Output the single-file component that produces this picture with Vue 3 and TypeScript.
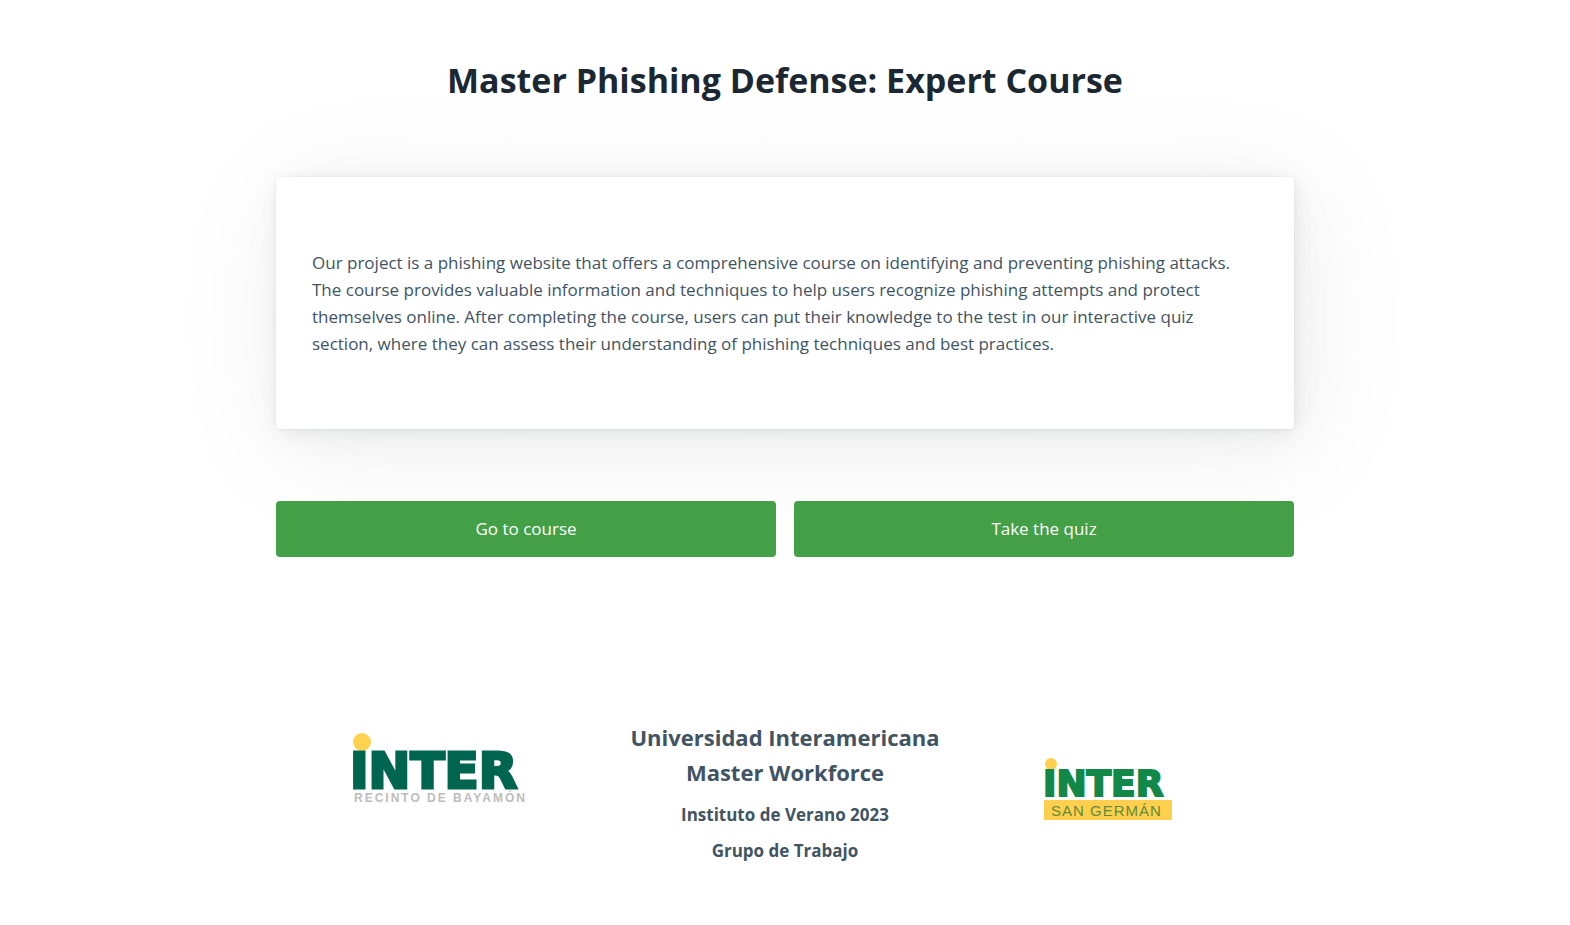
<script setup lang="ts">
const actions: string[] = ['Go to course', 'Take the quiz']
</script>

<template>
  <main class="container">
    <h1>Master Phishing Defense: Expert Course</h1>
    <article>
      <p>
        Our project is a phishing website that offers a comprehensive course on identifying and
        preventing phishing attacks. The course provides valuable information and techniques to help
        users recognize phishing attempts and protect themselves online. After completing the course,
        users can put their knowledge to the test in our interactive quiz section, where they can
        assess their understanding of phishing techniques and best practices.
      </p>
    </article>
    <div class="actions">
      <button v-for="action in actions" :key="action" type="button">{{ action }}</button>
    </div>
  </main>

  <footer class="container footer">
    <div class="brand">
      <svg width="176" height="76" viewBox="0 0 176 76" role="img" aria-label="Inter Recinto de Bayamón">
        <circle cx="10" cy="10" r="9" fill="#ffd24f" />
        <text class="wordmark bayamon" x="-2" y="56">INTER</text>
        <text class="bayamon-campus" x="2" y="70">RECINTO DE BAYAMÓN</text>
      </svg>
    </div>
    <div class="credits">
      <h3>Universidad Interamericana Master Workforce</h3>
      <h4>Instituto de Verano 2023</h4>
      <h4>Grupo de Trabajo</h4>
    </div>
    <div class="brand german-brand">
      <svg width="128" height="64" viewBox="0 0 128 64" role="img" aria-label="Inter San Germán">
        <circle cx="7" cy="7" r="6" fill="#ffcf4d" />
        <text class="wordmark german" x="-1" y="39">INTER</text>
        <rect x="0" y="43" width="128" height="20" fill="#ffcf4d" />
        <text class="german-campus" x="7" y="59">SAN GERMÁN</text>
      </svg>
    </div>
  </footer>
</template>

<style>
body {
  background: #fff;
}
</style>

<style scoped>
.container {
  box-sizing: border-box;
  max-width: 1018px;
  margin: 0 auto;
  font-family: "Open Sans", "Noto Sans", sans-serif;
  font-size: 17px;
  line-height: 27px;
  color: #415462;
}
h1 {
  margin: 55px 0 71px;
  text-align: center;
  font-size: 34px;
  line-height: 51px;
  color: #1b2832;
}
article {
  padding: 72px 36px;
  border-radius: 4px;
  background: #fff;
  box-shadow:
    0 1px 3px rgba(27, 40, 50, 0.017),
    1px 1px 7px rgba(27, 40, 50, 0.024),
    1px 2px 14px rgba(27, 40, 50, 0.03),
    2px 4px 24px rgba(27, 40, 50, 0.036),
    4px 8px 45px rgba(27, 40, 50, 0.043),
    9px 18px 120px 8px rgba(27, 40, 50, 0.06),
    0 0 0 1px rgba(27, 40, 50, 0.015);
}
p {
  margin: 0;
}
.actions {
  display: grid;
  grid-template-columns: 1fr 1fr;
  gap: 18px;
  margin-top: 72px;
}
button {
  padding: 14px 18px;
  border: 0;
  border-radius: 4px;
  background: #43a047;
  color: #fff;
  font: inherit;
  line-height: 28px;
  cursor: pointer;
}
.footer {
  display: grid;
  grid-template-columns: repeat(3, 1fr);
  gap: 18px;
  margin-top: 163px;
}
.brand {
  display: flex;
  justify-content: center;
  align-items: flex-start;
  padding-top: 12px;
}
.brand svg {
  overflow: visible;
}
.german-brand {
  padding: 37px 44px 0 0;
}
.credits {
  text-align: center;
}
h3 {
  margin: 0 0 11px;
  font-size: 22px;
  line-height: 35px;
}
h4 {
  margin: 0 0 9px;
  font-size: 17px;
  line-height: 27px;
}
.wordmark {
  font-family: "DejaVu Sans", sans-serif;
  font-weight: 700;
  line-height: 1;
}
.bayamon {
  font-size: 50px;
  fill: #00654e;
  stroke: #00654e;
  stroke-width: 3px;
}
.german {
  font-size: 36px;
  fill: #118848;
  stroke: #118848;
  stroke-width: 2px;
}
.bayamon-campus {
  font: bold 12px "Liberation Sans", sans-serif;
  letter-spacing: 2px;
  fill: #bcbcbc;
}
.german-campus {
  font: 15px "Liberation Sans", sans-serif;
  letter-spacing: 1px;
  fill: #5e8b3c;
}
</style>
